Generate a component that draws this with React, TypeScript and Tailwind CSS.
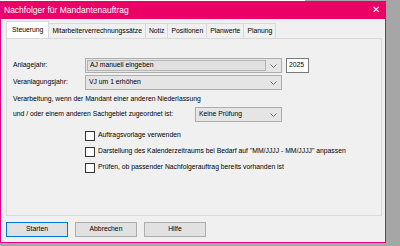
import React from "react";

function Combo({ text, className, inner }: { text: string; className: string; inner?: boolean }) {
  return (
    <div className={"flex items-center h-[15px] border border-[#adadad] bg-[#e5e5e5] " + className}>
      {inner ? (
        <span className="flex-1 h-[11px] ml-[1px] border border-[#b4b4b4] bg-[#e1e1e1] pl-[2px] flex items-center leading-none">{text}</span>
      ) : (
        <span className="flex-1 pl-[3px] leading-none">{text}</span>
      )}
      <svg width="7" height="4" viewBox="0 0 7 4" className="mx-[4px]">
        <path d="M0.5 0.5 L3.5 3.5 L6.5 0.5" fill="none" stroke="#707070" strokeWidth="1" />
      </svg>
    </div>
  );
}

function Check({ label }: { label: string }) {
  return (
    <div className="flex items-center gap-[3px] h-[15px]">
      <div className="w-[10px] h-[10px] border border-[#333] bg-white" />
      <span>{label}</span>
    </div>
  );
}

export default function App() {
  const tabs = ["Mitarbeiterverrechnungssätze", "Notiz", "Positionen", "Planwerte", "Planung"];
  return (
    <div
      className="w-[400px] h-[246px] bg-[#a6a6a6] overflow-hidden text-[6.8px] text-black"
      style={{ fontFamily: '"Liberation Sans", Arial, sans-serif' }}
    >
      <div className="h-[1px] w-[305px] bg-white" />
      <div className="w-[386px] h-[242px] border border-[#e4007a] border-t-0 bg-[#f0f0f0] flex flex-col">
        <div className="h-[18px] bg-[#eb0066] flex items-center justify-between pl-[3px] pr-[5px] text-white text-[8.5px]">
          <span>Nachfolger für Mandantenauftrag</span>
          <span className="text-[10px] leading-none font-light">✕</span>
        </div>
        <div className="flex-1 flex flex-col px-[5px] pt-[3px]">
          <div className="flex items-end h-[16px]">
            <div className="bg-white border border-[#d9d9d9] border-b-0 h-[17px] px-[5px] flex items-center">Steuerung</div>
            {tabs.map((t) => (
              <div key={t} className="border border-[#d9d9d9] border-l-0 border-b-0 h-[15px] px-[3px] flex items-center">
                {t}
              </div>
            ))}
          </div>
          <div className="h-[178px] w-[376px] border border-[#d9d9d9] bg-[#f0f0f0] flex flex-col pl-[6px] pt-[19px]">
            <div className="flex items-center h-[15px]">
              <span className="w-[72px]">Anlagejahr:</span>
              <Combo text="AJ manuell eingeben" className="w-[197px]" inner />
              <div className="ml-[4px] w-[23px] h-[15px] border border-[#7a7a7a] bg-white flex items-center pl-[2px]">2025</div>
            </div>
            <div className="flex items-center h-[15px] mt-[2px]">
              <span className="w-[72px]">Veranlagungsjahr:</span>
              <Combo text="VJ um 1 erhöhen" className="w-[197px]" />
            </div>
            <div className="mt-[2px] h-[15px] flex items-center">Verarbeitung, wenn der Mandant einer anderen Niederlassung</div>
            <div className="flex items-center h-[15px]">
              <span className="w-[182px]">und / oder einem anderen Sachgebiet zugeordnet ist:</span>
              <Combo text="Keine Prüfung" className="w-[87px]" />
            </div>
            <div className="pl-[72px] mt-[6px] flex flex-col gap-[1px]">
              <Check label="Auftragsvorlage verwenden" />
              <Check label={'Darstellung des Kalenderzeitraums bei Bedarf auf "MM/JJJJ - MM/JJJJ" anpassen'} />
              <Check label="Prüfen, ob passender Nachfolgerauftrag bereits vorhanden ist" />
            </div>
          </div>
          <div className="flex gap-[7px] mt-[6px]">
            <div className="w-[62px] h-[15px] border border-[#0078d7] bg-[#e1e1e1] flex items-center justify-center">Starten</div>
            <div className="w-[62px] h-[15px] border border-[#adadad] bg-[#e1e1e1] flex items-center justify-center">Abbrechen</div>
            <div className="w-[62px] h-[15px] border border-[#adadad] bg-[#e1e1e1] flex items-center justify-center">Hilfe</div>
          </div>
        </div>
      </div>
    </div>
  );
}
